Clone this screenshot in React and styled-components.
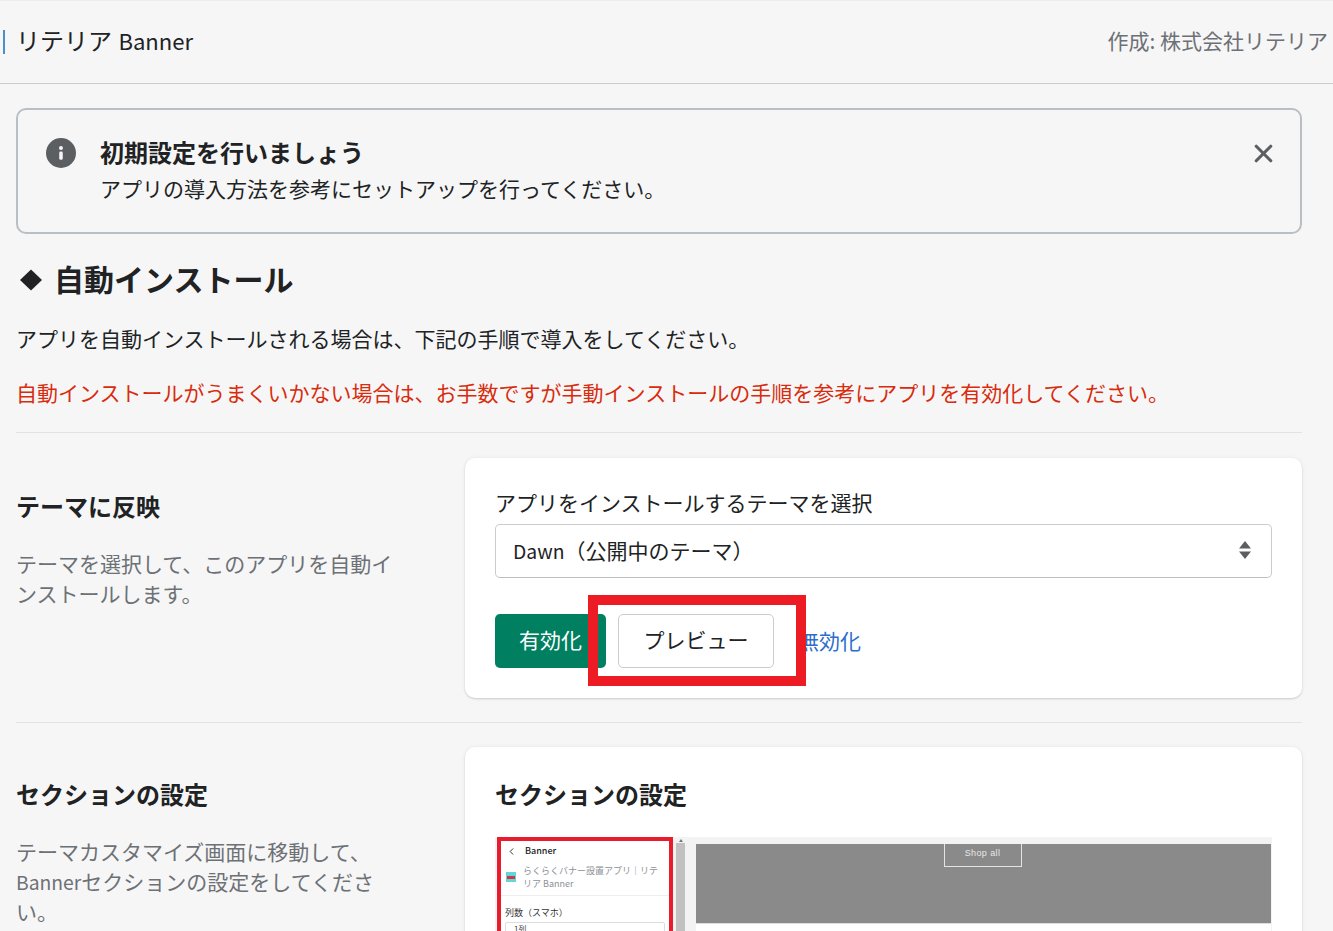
import React from "react";
import styled, { createGlobalStyle } from "styled-components";
import { ChevronLeft, X } from "lucide-react";

const Global = createGlobalStyle`
  html, body {
    margin: 0;
    height: 931px;
    overflow: hidden;
    background: #f6f6f7;
  }
  * { box-sizing: border-box; }
  body {
    font-family: "Noto Sans CJK JP", "Noto Sans", sans-serif;
    color: #202223;
  }
`;

const Page = styled.div`
  border-top: 1px solid #ececec;
`;

const Header = styled.header`
  height: 83px;
  border-bottom: 1px solid #c9cccf;
  display: flex;
  justify-content: space-between;
  align-items: center;
  padding: 0 5px 4px 3px;
`;

const AppName = styled.div`
  display: flex;
  align-items: center;
  font-size: 24px;
  line-height: 26px;
  white-space: pre;
  &::before {
    content: "";
    width: 2px;
    height: 24px;
    background: #4a90c8;
    margin-right: 11px;
    position: relative;
    top: 2px;
  }
`;

const Latin = styled.span`
  display: inline-block;
  font-size: 0.92em;
  line-height: 1;
  margin-left: ${(p) => p.$ml || 0}px;
`;

const Author = styled.div`
  font-size: 21px;
  color: #6d7175;
`;

const Main = styled.main`
  width: 1286px;
  margin-left: 16px;
  padding-top: 24px;
`;

const Notice = styled.div`
  height: 126px;
  border: 2px solid #babfc3;
  border-radius: 10px;
  display: flex;
  padding: 28px 28px 0 28px;
`;

const InfoDot = styled.div`
  width: 30px;
  height: 30px;
  border-radius: 50%;
  background: #5c5f62;
  flex: none;
  color: #f6f6f7;
  display: flex;
  align-items: center;
  justify-content: center;
`;

const NoticeBody = styled.div`
  flex: 1;
  margin: -2px 0 0 24px;
`;

const NoticeTitle = styled.div`
  font-size: 24px;
  font-weight: 700;
  line-height: 32px;
`;

const NoticeText = styled.div`
  font-size: 21px;
  line-height: 36px;
  margin-top: 2px;
`;

const CloseBtn = styled.div`
  color: #5c5f62;
  height: 30px;
  display: flex;
  align-items: center;
  margin-right: -6px;
`;

const Title = styled.h1`
  font-size: 30px;
  line-height: 40px;
  font-weight: 700;
  margin: 24px 0 0;
  display: flex;
  align-items: center;
  gap: 11px;
  padding-left: 3px;
  svg {
    margin-top: 4px;
  }
`;

const Para = styled.p`
  font-size: 21px;
  line-height: 30px;
  margin: ${(p) => p.$mt}px 0 0;
  color: ${(p) => (p.$red ? "#d82c0d" : "#202223")};
  white-space: nowrap;
`;

const Divider = styled.hr`
  border: 0;
  border-top: 1px solid #e1e3e5;
  margin: ${(p) => p.$mt}px 0 0;
`;

const Section = styled.section`
  display: grid;
  grid-template-columns: 449px 837px;
  padding-top: ${(p) => p.$top}px;
`;

const SideTitle = styled.h2`
  font-size: 24px;
  line-height: 32px;
  font-weight: 700;
  margin: ${(p) => p.$mt}px 0 0;
`;

const SideText = styled.p`
  font-size: 21px;
  line-height: 30px;
  color: #6d7175;
  margin: 26px 0 0;
  width: 380px;
`;

const Card = styled.div`
  background: #fff;
  border-radius: 10px;
  box-shadow: 0 0 5px rgba(23, 24, 24, 0.05), 0 1px 2px rgba(0, 0, 0, 0.15);
  padding: ${(p) => p.$pad};
  height: ${(p) => p.$h};
`;

const Label = styled.div`
  font-size: 21px;
  line-height: 30px;
`;

const Select = styled.div`
  height: 54px;
  margin-top: 7px;
  border: 1px solid #c9cccf;
  border-bottom-color: #babfc3;
  border-radius: 5px;
  display: flex;
  align-items: center;
  justify-content: space-between;
  padding: 0 19px 2px 17px;
  font-size: 21px;
`;

const Actions = styled.div`
  position: relative;
  display: flex;
  align-items: center;
  gap: 12px;
  margin-top: 36px;
`;

const Button = styled.div`
  height: 54px;
  min-width: ${(p) => (p.$primary ? 111 : 156)}px;
  padding-bottom: 4px;
  border-radius: 5px;
  font-size: 21px;
  display: flex;
  align-items: center;
  justify-content: center;
  background: ${(p) => (p.$primary ? "#008060" : "#fff")};
  color: ${(p) => (p.$primary ? "#fff" : "#202223")};
  border: ${(p) => (p.$primary ? "none" : "1px solid #c9cccf")};
`;

const LinkBtn = styled.div`
  font-size: 21px;
  color: #2c6ecb;
  margin: 0 0 2px 12px;
`;

const Highlight = styled.div`
  position: absolute;
  left: 93px;
  top: -19px;
  width: 218px;
  height: 91px;
  border: 10px solid #ed1c24;
`;

const CardTitle = styled.h2`
  font-size: 24px;
  line-height: 32px;
  font-weight: 700;
  margin: 0;
`;

const Shot = styled.div`
  height: 130px;
  margin-top: 27px;
  background: #f3f3f3;
  display: flex;
  overflow: hidden;
`;

const ShotPanel = styled.div`
  width: 176px;
  margin-left: 2px;
  flex: none;
  height: 140px;
  border: 4px solid #e81c2c;
  background: #fff;
  padding: 3px 0 0;
  color: #444;
`;

const ShotHead = styled.div`
  display: flex;
  align-items: center;
  font-size: 9px;
  line-height: 14px;
  font-weight: 500;
  color: #202223;
  padding-left: 5px;
  gap: 8px;
`;

const ShotApp = styled.div`
  display: flex;
  align-items: center;
  gap: 7px;
  padding: 6px 6px 5px 5px;
  font-size: 9px;
  line-height: 13px;
  color: #8c9196;
  border-bottom: 1px solid #eee;
`;

const ShotIcon = styled.div`
  width: 10px;
  height: 10px;
  background: #63d6d8;
  flex: none;
  display: flex;
  align-items: center;
  padding: 0 1px;
  &::before {
    content: "";
    width: 100%;
    height: 3px;
    background: #d8324a;
  }
`;

const ShotLabel = styled.div`
  font-size: 9px;
  line-height: 14px;
  padding: 10px 0 2px 4px;
  color: #333;
`;

const ShotSelect = styled.div`
  margin: 0 4px;
  height: 20px;
  border: 1px solid #ddd;
  border-radius: 2px;
  font-size: 8px;
  padding-left: 8px;
`;

const Scrollbar = styled.div`
  width: 9px;
  margin-left: 3px;
  flex: none;
  display: flex;
  flex-direction: column;
  align-items: center;
  padding-top: 2px;
  &::before {
    content: "";
    border: 2.5px solid transparent;
    border-top: 0;
    border-bottom: 3px solid #777;
    margin-bottom: 1px;
  }
  &::after {
    content: "";
    flex: 1;
    align-self: stretch;
    background: #c1c1c1;
  }
`;

const ShotPreview = styled.div`
  flex: 1;
  margin: 7px 1px 0 11px;
  background: #fff;
`;

const Hero = styled.div`
  height: 80px;
  background: #8a8a8a;
  display: flex;
  justify-content: center;
  border-bottom: 1px solid #ddd;
`;

const ShopBtn = styled.div`
  width: 78px;
  height: 23px;
  margin-right: 2px;
  border: 1px solid #e4e4e4;
  border-top: 0;
  color: #e8e8e8;
  font-size: 9px;
  line-height: 18px;
  text-align: center;
  font-family: "Liberation Sans", sans-serif;
  letter-spacing: 0.4px;
`;

export default function App() {
  return (
    <Page>
      <Global />
      <Header>
        <AppName>
          リテリア <Latin $ml={1}>Banner</Latin>
        </AppName>
        <Author>作成: 株式会社リテリア</Author>
      </Header>
      <Main>
        <Notice>
          <InfoDot>
            <svg width="22" height="22" viewBox="0 0 20 20" fill="currentColor">
              <circle cx="10" cy="5.4" r="1.8" />
              <rect x="8.4" y="8.6" width="3.2" height="7.6" rx="1.3" />
            </svg>
          </InfoDot>
          <NoticeBody>
            <NoticeTitle>初期設定を行いましょう</NoticeTitle>
            <NoticeText>アプリの導入方法を参考にセットアップを行ってください。</NoticeText>
          </NoticeBody>
          <CloseBtn>
            <X size={29} strokeWidth={2.6} />
          </CloseBtn>
        </Notice>

        <Title>
          <svg width="24" height="24" viewBox="0 0 24 24" fill="#202223">
            <path d="M12 1.5 23 12 12 22.5 1 12z" />
          </svg>
          自動インストール
        </Title>
        <Para $mt={25}>アプリを自動インストールされる場合は、下記の手順で導入をしてください。</Para>
        <Para $mt={24} $red>
          自動インストールがうまくいかない場合は、お手数ですが手動インストールの手順を参考にアプリを有効化してください。
        </Para>
        <Divider $mt={25} />

        <Section $top={25}>
          <div>
            <SideTitle $mt={32}>テーマに反映</SideTitle>
            <SideText>テーマを選択して、このアプリを自動インストールします。</SideText>
          </div>
          <Card $pad="29px 30px 0" $h="240px">
            <Label>アプリをインストールするテーマを選択</Label>
            <Select>
              <span>
                <Latin>Dawn</Latin>（公開中のテーマ）
              </span>
              <svg width="14" height="20" viewBox="0 0 14 20" fill="#5c5f62">
                <path d="M7 1 13 8.5H1zM1 11.5H13L7 19z" />
              </svg>
            </Select>
            <Actions>
              <Button $primary>有効化</Button>
              <Button>プレビュー</Button>
              <LinkBtn>無効化</LinkBtn>
              <Highlight />
            </Actions>
          </Card>
        </Section>

        <Divider $mt={24} />

        <Section $top={24}>
          <div>
            <SideTitle $mt={31}>セクションの設定</SideTitle>
            <SideText>
              テーマカスタマイズ画面に移動して、<Latin>Banner</Latin>セクションの設定をしてください。
            </SideText>
          </div>
          <Card $pad="31px 30px 0" $h="220px">
            <CardTitle>セクションの設定</CardTitle>
            <Shot>
              <ShotPanel>
                <ShotHead>
                  <ChevronLeft size={11} />
                  Banner
                </ShotHead>
                <ShotApp>
                  <ShotIcon />
                  <span>らくらくバナー設置アプリ｜リテリア Banner</span>
                </ShotApp>
                <ShotLabel>列数（スマホ）</ShotLabel>
                <ShotSelect>1列</ShotSelect>
              </ShotPanel>
              <Scrollbar />
              <ShotPreview>
                <Hero>
                  <ShopBtn>Shop all</ShopBtn>
                </Hero>
              </ShotPreview>
            </Shot>
          </Card>
        </Section>
      </Main>
    </Page>
  );
}
